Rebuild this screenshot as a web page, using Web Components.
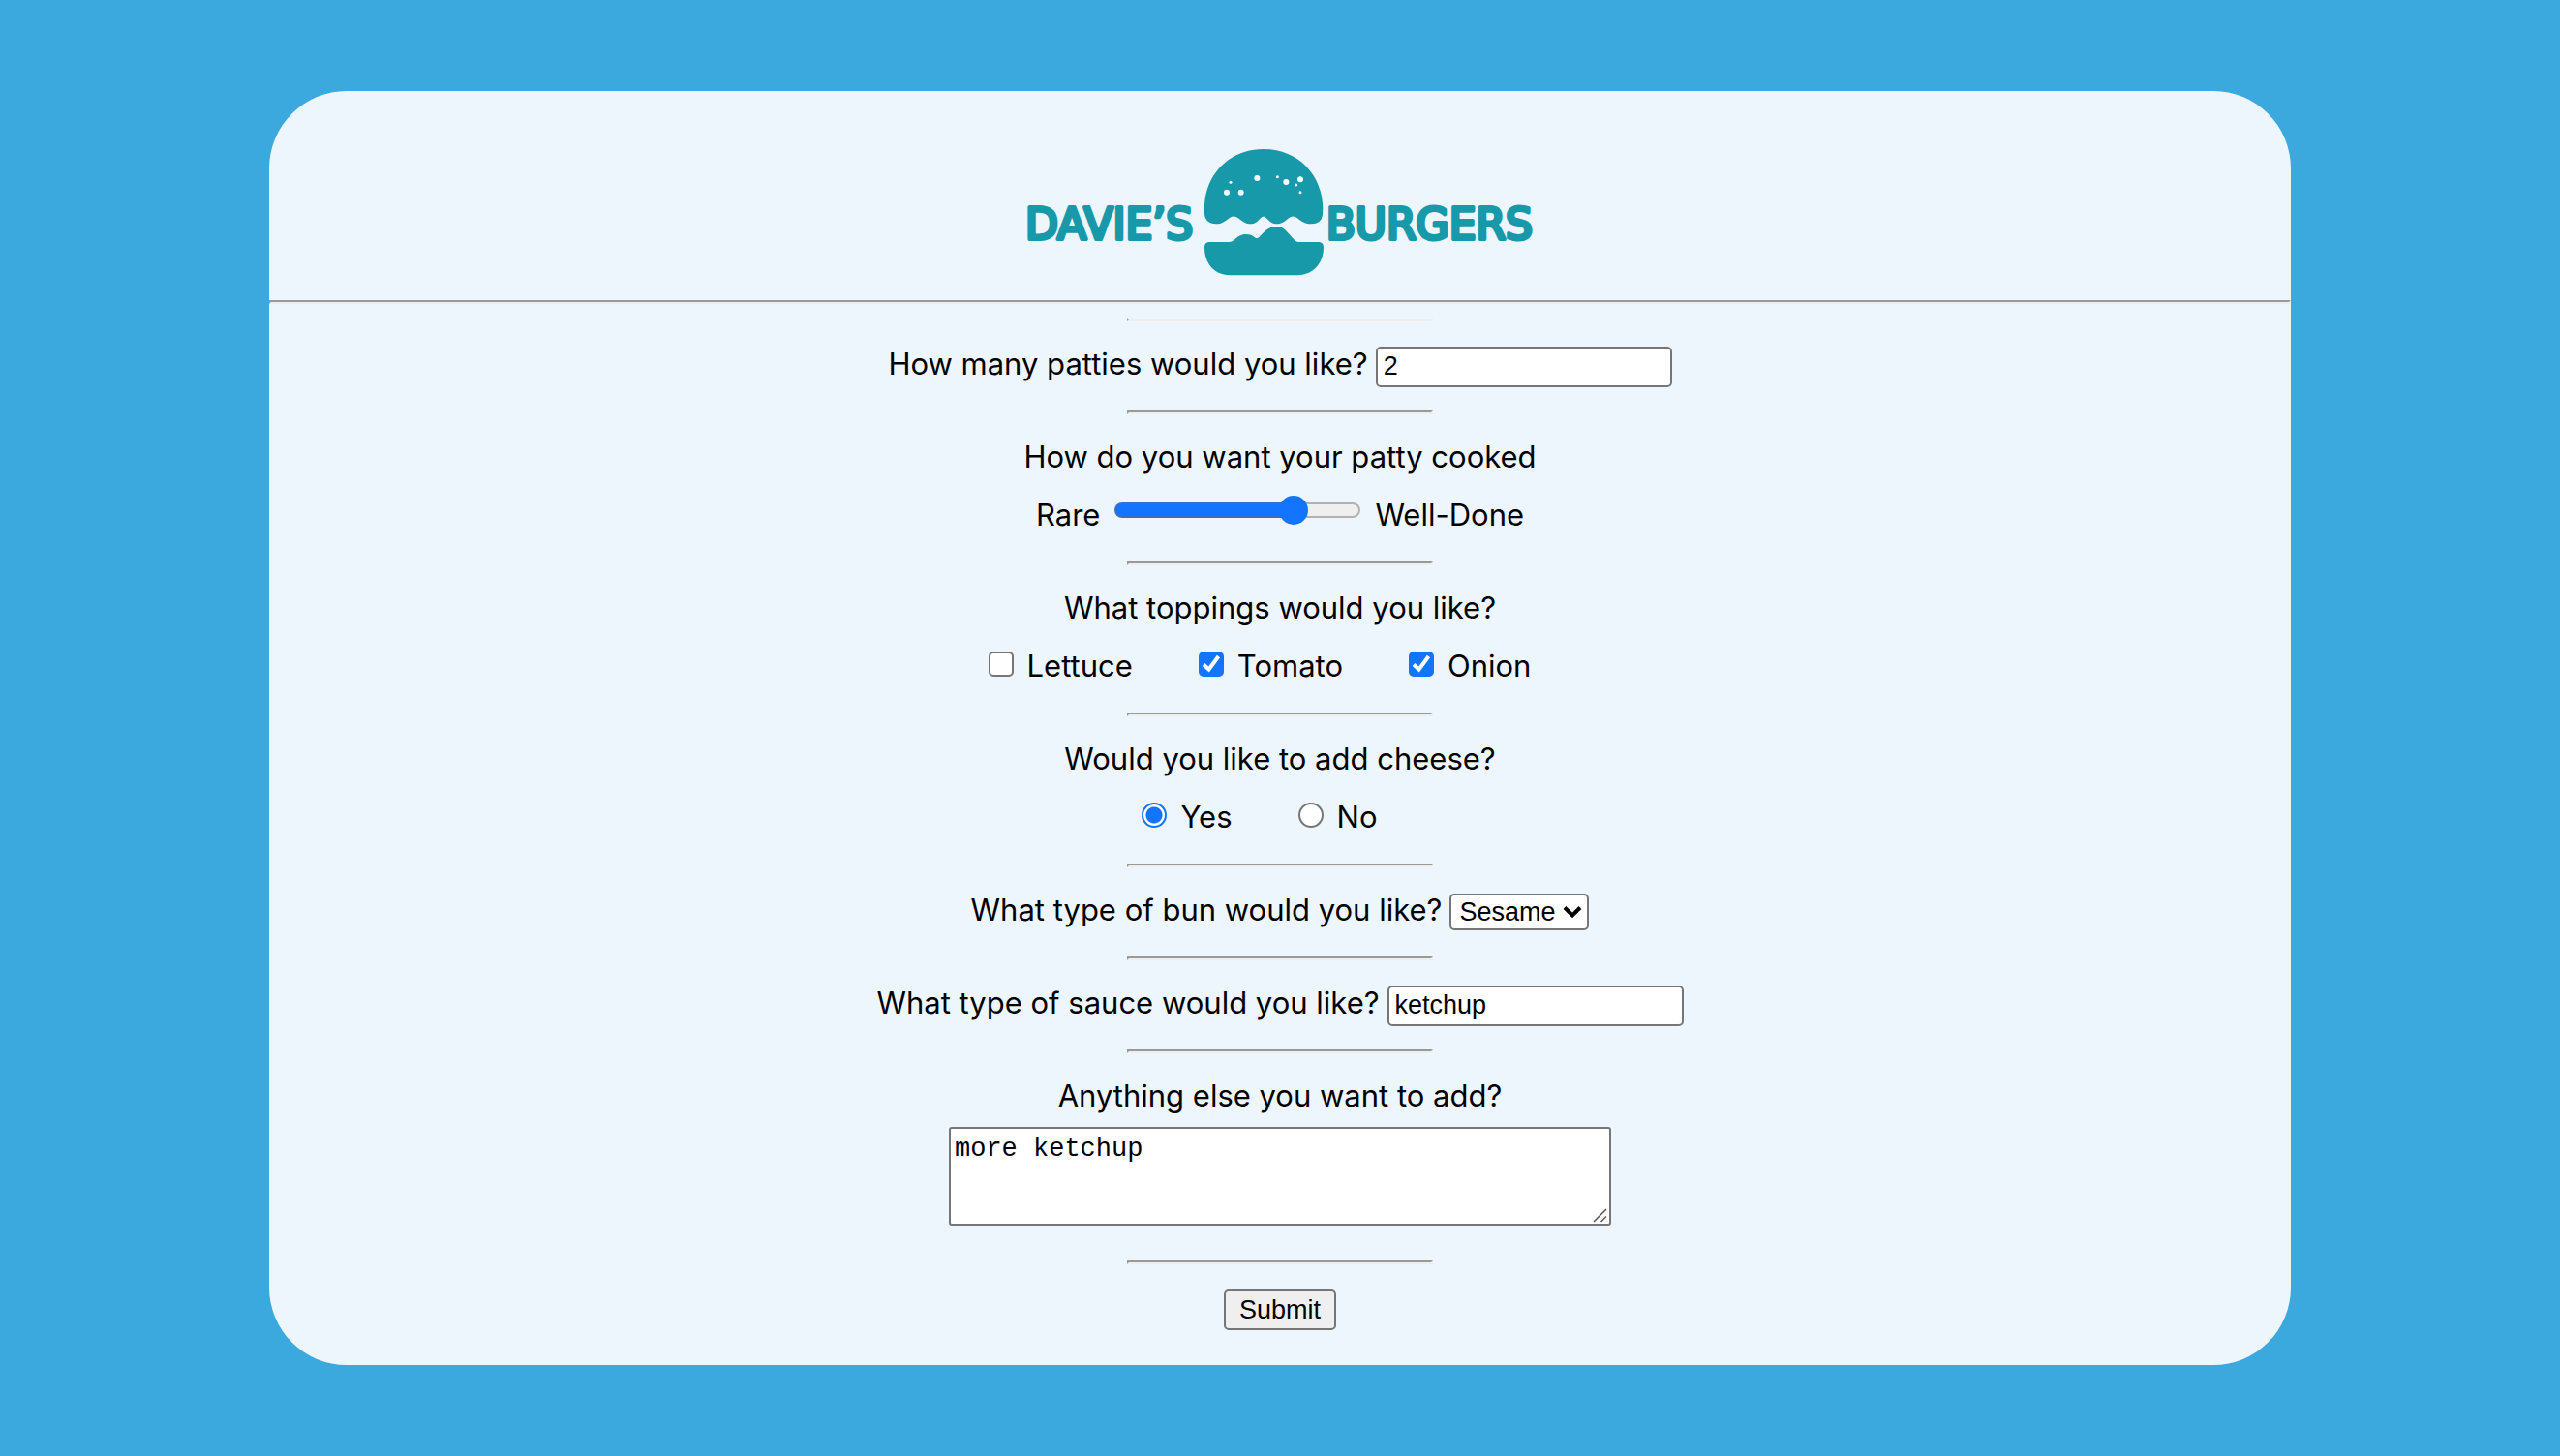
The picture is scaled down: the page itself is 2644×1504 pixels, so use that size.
<!DOCTYPE html>
<html lang="en">
<head>
<meta charset="utf-8">
<title>Davie's Burgers</title>
<style>
  body {
    margin: 0;
    min-height: 100vh;
    display: flex;
    align-items: center;
    background: #3ba9dd;
    color: #000;
    font: 31px/60px Inter, "Open Sans", sans-serif;
  }
  order-card { flex: 0 1 79%; margin: 0 auto; }
</style>
</head>
<body>
<order-card>
  <burger-logo slot="header"></burger-logo>
  <order-form></order-form>
</order-card>

<template id="order-card">
  <style>
    :host { display: block; background: #eef6fd; border-radius: 80px; overflow: hidden; box-sizing: border-box; }
    header { display: flex; justify-content: center; padding: 60px 0 24px; }
    hr { margin: 0; border: 2px inset #eee; }
    main { padding-top: 14px; }
  </style>
  <header><slot name="header"></slot></header>
  <hr>
  <main><slot></slot></main>
</template>

<template id="burger-logo">
  <style>
    :host { display: block; }
    svg { display: block; width: 524px; height: 132px; fill: #1899a9; }
    text { font: 400 44px "DejaVu Sans", sans-serif; stroke: #1899a9; stroke-width: 4px; stroke-linejoin: round; }
    .seeds { fill: #fff; }
  </style>
  <svg viewBox="0 0 524 132" role="img" aria-label="Davie's Burgers">
    <text x="-1" y="93">DAVIE’S</text>
    <text x="523" y="93" text-anchor="end">BURGERS</text>
    <g transform="translate(170 -14) scale(.33333)">
      <path d="M42 225C42 125 115 42 225 42C335 42 408 125 409 225L408 245Q405 274 372 274C355 274 345 268 330 256Q316 245 303 256C290 267 282 274 267 274C252 274 246 268 233 255Q225 245 216 256C204 268 198 274 185 274C170 274 163 268 147 256Q134 246 120 255C103 267 95 274 78 274C55 274 42 260 42 240Z"/>
      <path d="M56 330H118Q126 330 132 325C145 313 155 306 170 306C183 306 190 309 200 317Q206 320 212 314C225 302 238 282 265 282C290 282 298 300 322 325Q327 330 332 330H397Q411 331 411 346C411 400 375 433 330 433H122C75 433 42 400 42 346Q42 331 56 330Z"/>
      <g class="seeds">
        <circle cx="111" cy="176" r="9"/><circle cx="155" cy="176" r="9"/><circle cx="123" cy="145" r="4.5"/>
        <circle cx="205" cy="132" r="9"/><circle cx="268" cy="128" r="4.5"/><circle cx="295" cy="144" r="9"/>
        <circle cx="339" cy="136" r="9"/><circle cx="326" cy="153" r="4.5"/><circle cx="339" cy="176" r="4.5"/>
      </g>
    </g>
  </svg>
</template>

<template id="form-section">
  <style>
    :host { display: block; padding-bottom: 18px; }
    hr { width: 312px; margin: 0 auto 14px; border: 2px inset #eee; }
    :host([first]) hr { border-top-color: transparent; }
    div { display: flex; flex-direction: column; align-items: center; }
  </style>
  <hr>
  <div><slot></slot></div>
</template>

<template id="text-question">
  <style>
    :host { display: flex; align-items: baseline; gap: 8px; }
    input { box-sizing: border-box; width: 306px; height: 42px; padding: 2px 6px; border: 2px solid #767676; border-radius: 5px; background: #fff; color: #000; font: 27px "Liberation Sans", Arial, sans-serif; appearance: textfield; }
  </style>
  <label for="answer"><slot></slot></label>
  <input id="answer">
</template>

<template id="select-question">
  <style>
    :host { display: flex; align-items: baseline; gap: 8px; }
    span { position: relative; display: flex; align-items: baseline; }
    select { box-sizing: border-box; height: 38px; padding: 0 32px 0 8px; border: 2px solid #767676; border-radius: 5px; background: #fff; color: #000; font: 27px "Liberation Sans", Arial, sans-serif; appearance: none; }
    svg { position: absolute; right: 7px; top: 12px; width: 20px; height: 14px; pointer-events: none; }
  </style>
  <label for="answer">What type of bun would you like?</label>
  <span>
    <select id="answer"><option>Sesame</option></select>
    <svg viewBox="0 0 20 14" fill="none" stroke="#000" stroke-width="4"><path d="M2 2.500L10 10.500L18 2.500"/></svg>
  </span>
</template>

<template id="slider-question">
  <style>
    :host { display: flex; flex-direction: column; align-items: center; }
    div { display: flex; align-items: baseline; gap: 15px; }
    input { appearance: none; width: 254px; height: 32px; margin: 0; background: none; }
    input::-webkit-slider-runnable-track {
      box-sizing: border-box; height: 16px; border: 2px solid transparent; border-radius: 8px;
      background: linear-gradient(90deg, #1374ff 74%, #efefef 74%) padding-box, linear-gradient(90deg, #3c6fc4 74%, #b2b2b2 74%) border-box;
    }
    input::-webkit-slider-thumb { appearance: none; width: 30px; height: 30px; margin-top: -9px; border: 0; border-radius: 50%; background: #1374ff; }
  </style>
  <label for="answer">How do you want your patty cooked</label>
  <div><span>Rare</span><input id="answer" type="range" min="0" max="100" value="76"><span>Well-Done</span></div>
</template>

<template id="choice-question">
  <style>
    :host { display: flex; flex-direction: column; align-items: center; }
    div { display: flex; gap: 14px; }
  </style>
  <span id="title"><slot name="title"></slot></span>
  <div role="group" aria-labelledby="title"><slot></slot></div>
</template>

<template id="choice-item">
  <style>
    :host { display: block; padding: 0 48px 0 6px; }
    label { display: flex; align-items: baseline; gap: 14px; }
    span { position: relative; display: flex; align-items: baseline; }
    input { appearance: none; box-sizing: border-box; width: 26px; height: 26px; margin: 0; border: 2px solid #767676; border-radius: 5px; background: #fff; }
    input[type=radio] { border-radius: 50%; }
    input[type=checkbox]:checked { border-color: #1374ff; background: #1374ff; }
    input[type=radio]:checked { border-color: #1374ff; background: radial-gradient(circle, #1374ff 8px, #fff 9px); }
    svg { position: absolute; inset: 0; width: 26px; height: 26px; pointer-events: none; visibility: hidden; }
    input[type=checkbox]:checked + svg { visibility: visible; }
  </style>
  <label><span><input><svg viewBox="0 0 26 26" fill="none" stroke="#fff" stroke-width="4"><path d="M5 13.500L10.500 18.500L20.500 5"/></svg></span><slot></slot></label>
</template>

<template id="notes-question">
  <style>
    :host { display: flex; flex-direction: column; align-items: center; padding: 0 0 18px; }
    div { position: relative; display: flex; margin-top: 2px; }
    textarea { box-sizing: border-box; width: 684px; height: 102px; padding: 6px 4px; border: 2px solid #767676; border-radius: 3px; background: #fff; color: #000; font: 27px/30px "Liberation Mono", monospace; resize: none; }
    svg { position: absolute; right: 4px; bottom: 3px; width: 15px; height: 15px; }
  </style>
  <label for="answer">Anything else you want to add?</label>
  <div>
    <textarea id="answer">more ketchup</textarea>
    <svg viewBox="0 0 15 15" stroke="#555" stroke-width="1.500"><path d="M1 14L14 1M8.500 14L14 8.500"/></svg>
  </div>
</template>

<template id="submit-button">
  <style>
    :host { display: block; padding: 12px 0 18px; }
    button { display: block; box-sizing: border-box; height: 42px; padding: 2px 14px; border: 2px solid #767676; border-radius: 5px; background: #efefef; color: #000; font: 27px "Liberation Sans", Arial, sans-serif; }
  </style>
  <button type="submit"><slot></slot></button>
</template>

<template id="order-form">
  <style>
    :host { display: block; }
    form { margin: 0; }
  </style>
  <form onsubmit="return false">
    <form-section first><text-question type="number" value="2">How many patties would you like?</text-question></form-section>
    <form-section><slider-question></slider-question></form-section>
    <form-section>
      <choice-question>
        <span slot="title">What toppings would you like?</span>
        <choice-item type="checkbox">Lettuce</choice-item>
        <choice-item type="checkbox" checked>Tomato</choice-item>
        <choice-item type="checkbox" checked>Onion</choice-item>
      </choice-question>
    </form-section>
    <form-section>
      <choice-question>
        <span slot="title">Would you like to add cheese?</span>
        <choice-item type="radio" checked>Yes</choice-item>
        <choice-item type="radio">No</choice-item>
      </choice-question>
    </form-section>
    <form-section><select-question></select-question></form-section>
    <form-section><text-question type="text" value="ketchup">What type of sauce would you like?</text-question></form-section>
    <form-section><notes-question></notes-question></form-section>
    <form-section><submit-button>Submit</submit-button></form-section>
  </form>
</template>

<script>
  class TemplateElement extends HTMLElement {
    constructor() {
      super();
      const template = document.getElementById(this.localName);
      this.attachShadow({ mode: "open" }).append(template.content.cloneNode(true));
    }
  }

  // Passes type, value and checked from the host to the control inside it.
  class FieldElement extends TemplateElement {
    connectedCallback() {
      const input = this.shadowRoot.querySelector("input");
      input.type = this.getAttribute("type");
      if (this.hasAttribute("value")) input.value = this.getAttribute("value");
      input.checked = this.hasAttribute("checked");
    }
  }

  class ChoiceItem extends FieldElement {
    connectedCallback() {
      super.connectedCallback();
      const input = this.shadowRoot.querySelector("input");
      // Radios live in separate shadow roots, so siblings are cleared by hand.
      input.addEventListener("change", () => {
        if (input.type !== "radio") return;
        for (const item of this.parentElement.querySelectorAll("choice-item")) {
          if (item !== this) item.shadowRoot.querySelector("input").checked = false;
        }
      });
    }
  }

  customElements.define("text-question", class extends FieldElement {});
  customElements.define("choice-item", ChoiceItem);
  for (const name of ["burger-logo", "form-section", "select-question", "slider-question",
                      "choice-question", "notes-question", "submit-button", "order-form", "order-card"]) {
    customElements.define(name, class extends TemplateElement {});
  }
</script>
</body>
</html>
